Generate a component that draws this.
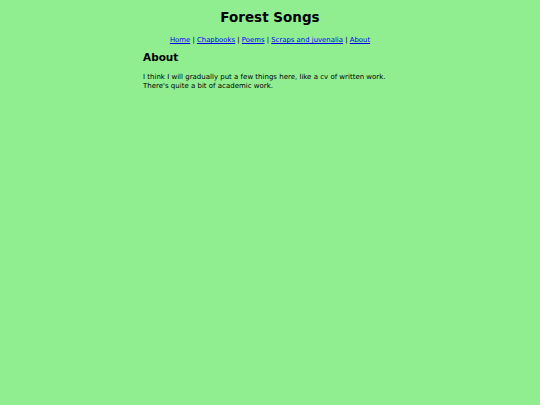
export default function App() {
    return (
        <div className="min-h-[405px] bg-[#90ee90] text-black font-['DejaVu_Sans',sans-serif]">
            <div className="mx-auto w-[254px] pt-[9px]">
                {/* Header */}
                <h1 className="text-center text-[13.5px] font-bold leading-[16px]">Forest Songs</h1>
                <nav className="mt-[11px] text-center text-[6.9px] leading-[9px] whitespace-nowrap">
                    <a href="#" className="text-[#0000ee] underline">Home</a> |{' '}
                    <a href="#" className="text-[#0000ee] underline">Chapbooks</a> |{' '}
                    <a href="#" className="text-[#0000ee] underline">Poems</a> |{' '}
                    <a href="#" className="text-[#0000ee] underline">Scraps and juvenalia</a> |{' '}
                    <a href="#" className="text-[#0000ee] underline">About</a>
                </nav>

                {/* Page body */}
                <h2 className="mt-[6px] text-[10.5px] font-bold leading-[13px]">About</h2>
                <p className="mt-[8.5px] text-[7px] leading-[9px]">
                    I think I will gradually put a few things here, like a cv of written work. There's quite a bit of academic work.
                </p>
            </div>
        </div>
    );
}
